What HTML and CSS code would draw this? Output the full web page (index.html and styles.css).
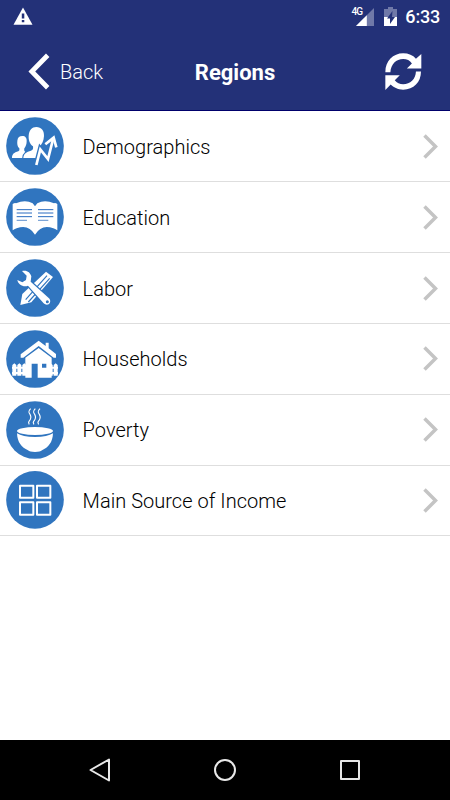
FILE: index.html
```html
<!DOCTYPE html>
<html lang="en">
<head>
<meta charset="utf-8">
<title>Regions</title>
<link rel="stylesheet" href="styles.css">
</head>
<body>
<div class="screen">
  <header class="top">
    <div class="status">
      <svg class="warning" viewBox="0 0 20 18"><path fill="#fff" d="M10 .5 19.5 17.8H.5z"/><path fill="#233178" d="M8.8 6.5h2.5v5H8.8zM8.8 13h2.5v2.3H8.8z"/></svg>
      <div class="indicators">
        <span class="network">4G</span>
        <svg class="signal" viewBox="0 0 18 18"><path fill="#7079a8" d="M18 0v18H0z"/><path fill="#fff" d="M10.8 7.2V18H0z"/></svg>
        <svg class="battery" viewBox="0 0 13 20"><path fill="#7079a8" d="M4 0h5v2h4v8H0V2h4z"/><path fill="#fff" d="M0 10h13v9H0z"/><path fill="#233178" d="M8.5 4 3 11.5h3V17l5-7H8z"/></svg>
        <span class="clock">6:33</span>
      </div>
    </div>
    <nav class="bar">
      <div class="back">
        <svg class="back-arrow" viewBox="0 0 22 37"><path fill="none" stroke="#fff" stroke-width="4.8" d="M19.7 2.2 3.8 18.5l15.9 16.3"/></svg>
        <span>Back</span>
      </div>
      <h1 class="title">Regions</h1>
      <svg class="refresh" viewBox="257 158 110 110"><path fill="#fff" d="M258 215C258 182 281 159 311 159C327 159 340 165 349 175L365 161V204H322L337 189C331 180 322 176 311 176C290 176 275 191 273 215z"/><path fill="#fff" d="M364 213C364 245 342 267 311 267C295 267 282 260 274 252L258 268V224H301L286 239C292 247 301 251 311 251C332 251 348 236 349 213z"/></svg>
    </nav>
  </header>
  <ul class="list">
    <li class="row">
      <svg class="icon" viewBox="18 21 174 174"><circle class="disc" cx="105" cy="108" r="86.5"/>
        <path fill="#fff" d="M36 144C36 132 42 128 55 124Q60 122 58 115C52 110 51 101 52 92C53 82 59 78 67 78C76 78 81 84 80 94C80 104 77 110 73 115Q71 122 75 125L81 128Q74 133 70 144z"/>
        <path class="cut" fill="#fff" d="M70 144C71 130 79 126 93 122Q101 120 99 109C90 103 85 90 86 77C87 60 96 51 109 51C124 51 133 62 132 78C131 93 126 103 119 109L117 119L111 144z"/>
        <path class="halo" d="m109 164 12-46 23 30 15-60"/>
        <path fill="none" stroke="#fff" stroke-width="8" d="m109 165 12-47 23 29 15-59"/><path fill="none" stroke="#fff" stroke-width="8" d="m136 103 25-20 8 29"/></svg>
      <span class="label">Demographics</span>
      <svg class="chevron" viewBox="0 0 15 25"><path d="m1.5 1.5 11 11-11 11"/></svg>
    </li>
    <li class="row">
      <svg class="icon" viewBox="18 21 174 174"><circle class="disc" cx="105" cy="108" r="86.5"/>
        <path fill="#fff" d="M38 69Q45 65 48 67Q76 55 98 67L105 76L112 67Q134 55 162 67Q166 65 172 69V148Q165 144 160 142Q125 128 105 161Q85 128 50 142Q45 144 38 148z"/>
        <path fill="none" stroke="#286bc0" stroke-width="3" d="M50 86h46M50 96h46M50 107h46M114 86h46M114 96h46M114 107h46"/><path fill="none" stroke="#7ea5d6" stroke-width="4" d="M50 118h31M114 118h31"/></svg>
      <span class="label">Education</span>
      <svg class="chevron" viewBox="0 0 15 25"><path d="m1.5 1.5 11 11-11 11"/></svg>
    </li>
    <li class="row">
      <svg class="icon" viewBox="18 21 174 174"><circle class="disc" cx="105" cy="108" r="86.5"/>
        <path fill="#fff" d="M138 59 159 75 94 151 61 159 67 126z"/><path fill="none" stroke="#3075bf" stroke-width="3.5" d="m141 71-64 72M149 79l-64 71"/>
        <path class="cut" fill="#fff" d="M66 57C80 53 91 61 94 73L92 89L147 139C153 145 151 154 146 157C141 160 135 158 131 154L84 101C71 107 54 98 52 84L67 91L78 84L80 71z"/><circle cx="142" cy="149" r="4.5" fill="#3075bf"/></svg>
      <span class="label">Labor</span>
      <svg class="chevron" viewBox="0 0 15 25"><path d="m1.5 1.5 11 11-11 11"/></svg>
    </li>
    <li class="row">
      <svg class="icon" viewBox="18 21 174 174"><circle class="disc" cx="105" cy="108" r="86.5"/>
        <path fill="#fff" d="M62 94 116 53 137 69V59H146V76L168 93V104H161L116 69L70 104H62z"/>
        <path fill="#fff" fill-rule="evenodd" d="M76 104 116 75 155 104V164H113V122H95V164H76zM126 122V134H139V122z"/>
        <path fill="#fff" d="M37 158V126l6-5 6 5v32zM52 158V126l6-5 6 5v32zM67 158V126l6-5 6 5v32zM146 158V126l6-5 6 5v32zM161 158V126l6-5 6 5v32zM36 131h42v6H36zM36 147h42v7H36zM150 131h24v6h-24zM150 147h24v7h-24z"/></svg>
      <span class="label">Households</span>
      <svg class="chevron" viewBox="0 0 15 25"><path d="m1.5 1.5 11 11-11 11"/></svg>
    </li>
    <li class="row">
      <svg class="icon" viewBox="18 21 174 174"><circle class="disc" cx="105" cy="108" r="86.5"/>
        <path fill="none" stroke="#fff" stroke-width="3.5" d="M92 44c-9 9-5 12-2 17s5 12-3 21c-3 4-1 6 1 9M106 44c-9 9-5 12-2 17s5 12-3 21c-3 4-1 6 1 9M120 44c-9 9-5 12-2 17s5 12-3 21c-3 4-1 6 1 9"/>
        <ellipse cx="105" cy="111" rx="54" ry="12" fill="#fff"/><path fill="#fff" d="M51 118Q67 129 105 129T159 118C158 145 145 161 126 169Q121 174 105 174T84 169C65 161 52 145 51 118z"/></svg>
      <span class="label">Poverty</span>
      <svg class="chevron" viewBox="0 0 15 25"><path d="m1.5 1.5 11 11-11 11"/></svg>
    </li>
    <li class="row">
      <svg class="icon" viewBox="18 19 174 174"><circle class="disc" cx="105" cy="105.5" r="86.5"/>
        <path fill="none" stroke="#fff" stroke-width="6" stroke-linejoin="round" d="M60 63h40v36H60zM111 63h40v36h-40zM60 113h40v37H60zM111 113h40v37h-40z"/></svg>
      <span class="label">Main Source of Income</span>
      <svg class="chevron" viewBox="0 0 15 25"><path d="m1.5 1.5 11 11-11 11"/></svg>
    </li>
  </ul>
  <footer class="softkeys">
    <svg class="key" viewBox="0 0 24 24"><path d="M21 1.5v21L2.5 12z"/></svg>
    <svg class="key" viewBox="0 0 24 24"><circle cx="12" cy="12" r="10"/></svg>
    <svg class="key" viewBox="0 0 24 24"><path d="M3 3h18v18H3z"/></svg>
  </footer>
</div>
</body>
</html>
```
FILE: styles.css
```css
* { box-sizing: border-box; }
body { margin: 0; font-family: Roboto, sans-serif; background: #fff; }
svg { display: block; flex: none; }
.screen { width: 450px; height: 800px; display: flex; flex-direction: column; overflow: hidden; }
.top { height: 111px; background: #233178; color: #fff; border-bottom: 1px solid #00006b; }
.status { height: 33px; padding: 0 10px 0 13px; display: flex; justify-content: space-between; align-items: center; }
.warning { width: 20px; height: 18px; margin-top: -2px; }
.indicators { display: flex; align-items: center; }
.network { font-size: 10px; font-weight: 500; line-height: 12px; letter-spacing: -0.8px; margin: -9px -6px 0 0; }
.signal { width: 18px; height: 18px; margin-right: 10px; }
.battery { width: 13px; height: 20px; margin-right: 8px; }
.clock { font-size: 18px; font-weight: 500; line-height: 22px; letter-spacing: -0.2px; }
.bar { height: 77px; padding: 0 28px; display: grid; grid-template-columns: 1fr auto 1fr; align-items: center; }
.back { display: flex; align-items: center; gap: 10px; font-size: 20px; font-weight: 300; }
.back-arrow { width: 22px; height: 37px; }
.title { margin: 2px 0 0 20px; font-size: 22px; line-height: 26px; font-weight: 700; }
.refresh { width: 37px; height: 37px; justify-self: end; }
.list { flex: 1; margin: 0; padding: 0; list-style: none; }
.row { height: 71px; padding: 0 12px 0 6px; display: flex; align-items: center; border-bottom: 1px solid #dedede; }
.row:last-child { height: 70px; }
.icon { width: 58px; height: 58px; margin-right: 18.6px; }
.row:last-child .icon { margin-top: -1px; }
.disc { fill: #3075bf; }
.cut { stroke: #3075bf; stroke-width: 7; paint-order: stroke; }
.halo { fill: none; stroke: #3075bf; stroke-width: 16; }
.label { flex: 1; font-size: 20px; line-height: 24px; font-weight: 300; color: #000; padding-top: 2px; letter-spacing: 0.03px; }
.chevron { width: 15px; height: 25px; }
.chevron path { fill: none; stroke: #c4c4c4; stroke-width: 3.5; }
.row:nth-child(n+4) .label { padding-top: 0; }
.row:nth-child(n+4) .chevron { margin-top: -1px; }
.softkeys { height: 60px; background: #000; display: flex; justify-content: center; align-items: center; gap: 101px; }
.key { width: 24px; height: 24px; fill: none; stroke: #e8e8e8; stroke-width: 2; stroke-linejoin: round; }
```
